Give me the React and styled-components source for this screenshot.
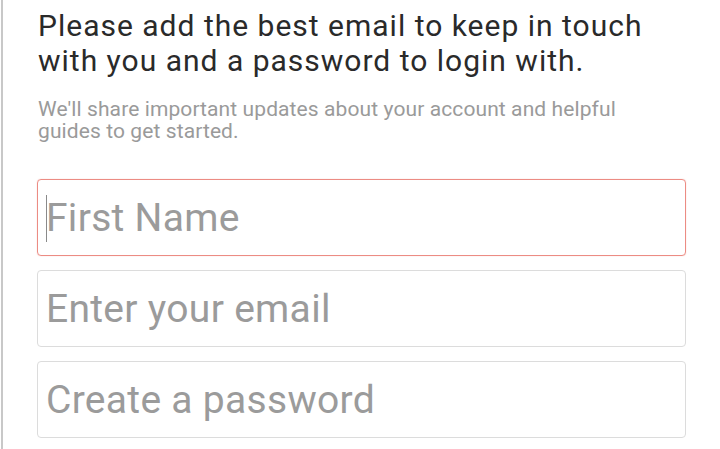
import React from 'react';
import styled, { createGlobalStyle } from 'styled-components';

const GlobalStyle = createGlobalStyle`
  html, body {
    margin: 0;
    padding: 0;
    background: #fff;
  }
  body {
    font-family: Roboto, "Liberation Sans", sans-serif;
  }
`

const Page = styled.div`
  width: 719px;
  height: 449px;
  box-sizing: border-box;
  border-left: 2px solid #c8c8c8;
  margin-left: 1px;
  padding: 8px 34px 0 34px;
  overflow: hidden;
`

const Heading = styled.h1`
  margin: 0 0 0 1px;
  font-size: 30px;
  line-height: 35px;
  letter-spacing: 1px;
  font-weight: 400;
  color: #2a2a2a;
`

const Subtitle = styled.p`
  margin: 20px 0 0 1px;
  max-width: 630px;
  font-size: 21px;
  line-height: 22px;
  letter-spacing: 0.1px;
  color: #9a9a9a;
`

const Fields = styled.div`
  display: flex;
  flex-direction: column;
  gap: 14px;
  margin-top: 37px;
`

const Field = styled.div`
  position: relative;
  height: 77px;
  box-sizing: border-box;
  border: 1px solid ${p => (p.$focused ? '#ec8c84' : '#dcdcdc')};
  box-shadow: ${p => (p.$focused ? '0 0 1px rgba(236, 120, 110, 0.6)' : 'none')};
  border-radius: 4px;
  display: flex;
  align-items: center;
  padding: 0 8px;
  font-size: 39px;
  letter-spacing: 0.3px;
  color: #9b9b9b;
`

const Caret = styled.span`
  position: absolute;
  left: 8px;
  top: 15px;
  width: 1px;
  height: 47px;
  background: #8a8a8a;
`

export default function App() {
  return (
    <>
      <GlobalStyle />
      <Page>
        <Heading>
          Please add the best email to keep in touch with you and a password to login with.
        </Heading>
        <Subtitle>
          We'll share important updates about your account and helpful guides to get started.
        </Subtitle>
        <Fields>
          <Field $focused>
            <Caret />
            First Name
          </Field>
          <Field>Enter your email</Field>
          <Field>Create a password</Field>
        </Fields>
      </Page>
    </>
  );
}
